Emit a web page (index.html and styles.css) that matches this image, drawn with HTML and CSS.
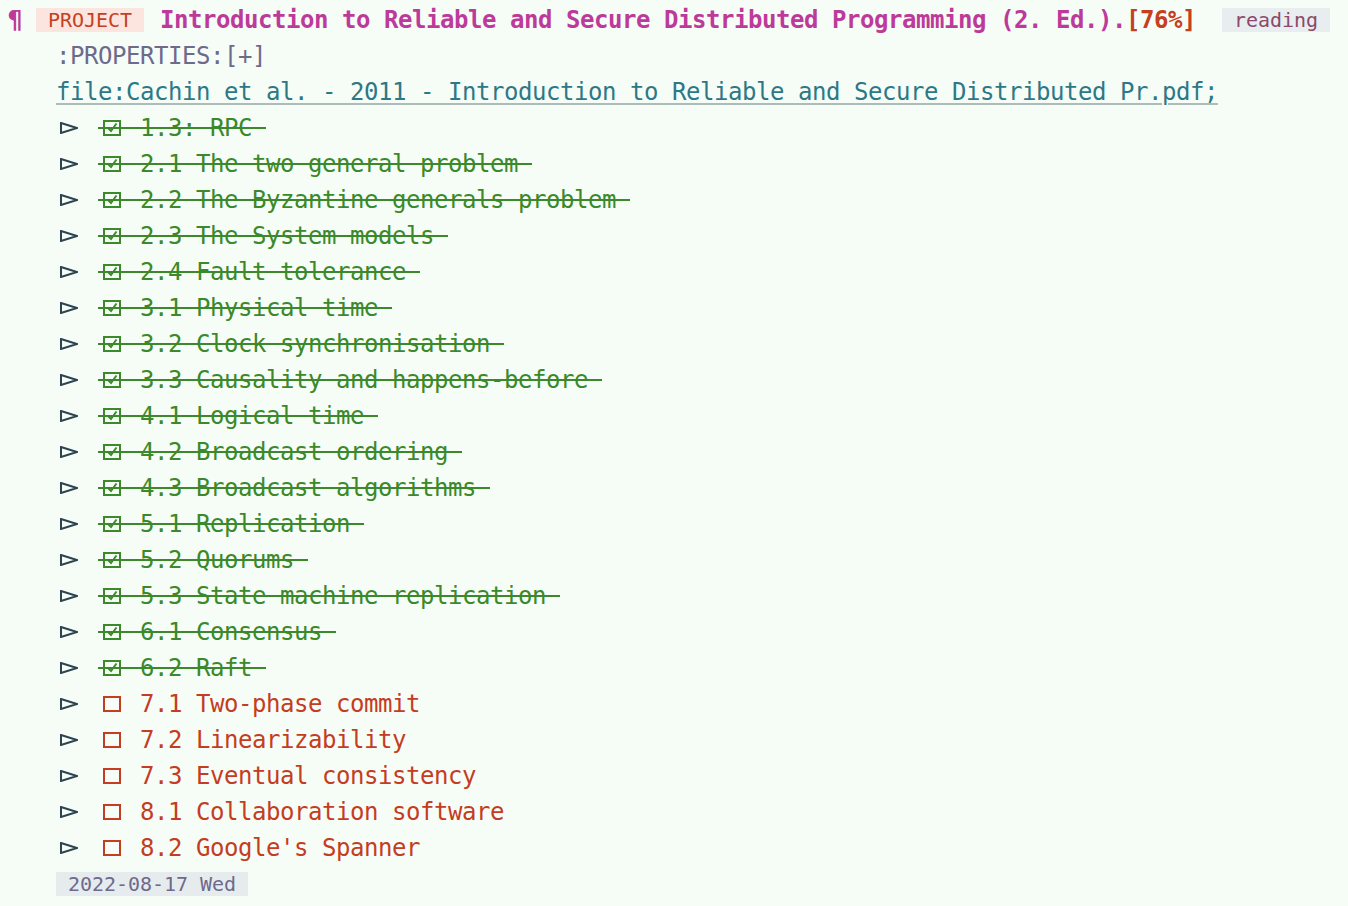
FILE: index.html
```html
<!DOCTYPE html>
<html>
<head>
<meta charset="utf-8">
<link rel="stylesheet" href="styles.css">
</head>
<body>
<div class="doc">
  <div class="row head">
    <span class="pilcrow">¶</span>
    <span class="kw">PROJECT</span>
    <span class="title">Introduction to Reliable and Secure Distributed Programming (2. Ed.).</span><span class="pct">[76%]</span>
    <span class="tag">reading</span>
  </div>
  <div class="row ind"><span class="props">:PROPERTIES:[+]</span></div>
  <div class="row ind"><span class="link">file:Cachin et al. - 2011 - Introduction to Reliable and Secure Distributed Pr.pdf;</span></div>

  <div class="item done"><span class="tri"><svg width="18" height="12" viewBox="0 0 18 12"><polygon points="1,1 17,6 1,11" /></svg></span><span class="task"><span class="cb"><svg width="18" height="16" viewBox="0 0 18 16"><rect x="1" y="1" width="16" height="14"/><polyline points="4.5,7.5 8,11 13.5,3.5"/></svg></span><span class="label"> 1.3: RPC </span></span></div>
  <div class="item done"><span class="tri"><svg width="18" height="12" viewBox="0 0 18 12"><polygon points="1,1 17,6 1,11" /></svg></span><span class="task"><span class="cb"><svg width="18" height="16" viewBox="0 0 18 16"><rect x="1" y="1" width="16" height="14"/><polyline points="4.5,7.5 8,11 13.5,3.5"/></svg></span><span class="label"> 2.1 The two general problem </span></span></div>
  <div class="item done"><span class="tri"><svg width="18" height="12" viewBox="0 0 18 12"><polygon points="1,1 17,6 1,11" /></svg></span><span class="task"><span class="cb"><svg width="18" height="16" viewBox="0 0 18 16"><rect x="1" y="1" width="16" height="14"/><polyline points="4.5,7.5 8,11 13.5,3.5"/></svg></span><span class="label"> 2.2 The Byzantine generals problem </span></span></div>
  <div class="item done"><span class="tri"><svg width="18" height="12" viewBox="0 0 18 12"><polygon points="1,1 17,6 1,11" /></svg></span><span class="task"><span class="cb"><svg width="18" height="16" viewBox="0 0 18 16"><rect x="1" y="1" width="16" height="14"/><polyline points="4.5,7.5 8,11 13.5,3.5"/></svg></span><span class="label"> 2.3 The System models </span></span></div>
  <div class="item done"><span class="tri"><svg width="18" height="12" viewBox="0 0 18 12"><polygon points="1,1 17,6 1,11" /></svg></span><span class="task"><span class="cb"><svg width="18" height="16" viewBox="0 0 18 16"><rect x="1" y="1" width="16" height="14"/><polyline points="4.5,7.5 8,11 13.5,3.5"/></svg></span><span class="label"> 2.4 Fault tolerance </span></span></div>
  <div class="item done"><span class="tri"><svg width="18" height="12" viewBox="0 0 18 12"><polygon points="1,1 17,6 1,11" /></svg></span><span class="task"><span class="cb"><svg width="18" height="16" viewBox="0 0 18 16"><rect x="1" y="1" width="16" height="14"/><polyline points="4.5,7.5 8,11 13.5,3.5"/></svg></span><span class="label"> 3.1 Physical time </span></span></div>
  <div class="item done"><span class="tri"><svg width="18" height="12" viewBox="0 0 18 12"><polygon points="1,1 17,6 1,11" /></svg></span><span class="task"><span class="cb"><svg width="18" height="16" viewBox="0 0 18 16"><rect x="1" y="1" width="16" height="14"/><polyline points="4.5,7.5 8,11 13.5,3.5"/></svg></span><span class="label"> 3.2 Clock synchronisation </span></span></div>
  <div class="item done"><span class="tri"><svg width="18" height="12" viewBox="0 0 18 12"><polygon points="1,1 17,6 1,11" /></svg></span><span class="task"><span class="cb"><svg width="18" height="16" viewBox="0 0 18 16"><rect x="1" y="1" width="16" height="14"/><polyline points="4.5,7.5 8,11 13.5,3.5"/></svg></span><span class="label"> 3.3 Causality and happens-before </span></span></div>
  <div class="item done"><span class="tri"><svg width="18" height="12" viewBox="0 0 18 12"><polygon points="1,1 17,6 1,11" /></svg></span><span class="task"><span class="cb"><svg width="18" height="16" viewBox="0 0 18 16"><rect x="1" y="1" width="16" height="14"/><polyline points="4.5,7.5 8,11 13.5,3.5"/></svg></span><span class="label"> 4.1 Logical time </span></span></div>
  <div class="item done"><span class="tri"><svg width="18" height="12" viewBox="0 0 18 12"><polygon points="1,1 17,6 1,11" /></svg></span><span class="task"><span class="cb"><svg width="18" height="16" viewBox="0 0 18 16"><rect x="1" y="1" width="16" height="14"/><polyline points="4.5,7.5 8,11 13.5,3.5"/></svg></span><span class="label"> 4.2 Broadcast ordering </span></span></div>
  <div class="item done"><span class="tri"><svg width="18" height="12" viewBox="0 0 18 12"><polygon points="1,1 17,6 1,11" /></svg></span><span class="task"><span class="cb"><svg width="18" height="16" viewBox="0 0 18 16"><rect x="1" y="1" width="16" height="14"/><polyline points="4.5,7.5 8,11 13.5,3.5"/></svg></span><span class="label"> 4.3 Broadcast algorithms </span></span></div>
  <div class="item done"><span class="tri"><svg width="18" height="12" viewBox="0 0 18 12"><polygon points="1,1 17,6 1,11" /></svg></span><span class="task"><span class="cb"><svg width="18" height="16" viewBox="0 0 18 16"><rect x="1" y="1" width="16" height="14"/><polyline points="4.5,7.5 8,11 13.5,3.5"/></svg></span><span class="label"> 5.1 Replication </span></span></div>
  <div class="item done"><span class="tri"><svg width="18" height="12" viewBox="0 0 18 12"><polygon points="1,1 17,6 1,11" /></svg></span><span class="task"><span class="cb"><svg width="18" height="16" viewBox="0 0 18 16"><rect x="1" y="1" width="16" height="14"/><polyline points="4.5,7.5 8,11 13.5,3.5"/></svg></span><span class="label"> 5.2 Quorums </span></span></div>
  <div class="item done"><span class="tri"><svg width="18" height="12" viewBox="0 0 18 12"><polygon points="1,1 17,6 1,11" /></svg></span><span class="task"><span class="cb"><svg width="18" height="16" viewBox="0 0 18 16"><rect x="1" y="1" width="16" height="14"/><polyline points="4.5,7.5 8,11 13.5,3.5"/></svg></span><span class="label"> 5.3 State machine replication </span></span></div>
  <div class="item done"><span class="tri"><svg width="18" height="12" viewBox="0 0 18 12"><polygon points="1,1 17,6 1,11" /></svg></span><span class="task"><span class="cb"><svg width="18" height="16" viewBox="0 0 18 16"><rect x="1" y="1" width="16" height="14"/><polyline points="4.5,7.5 8,11 13.5,3.5"/></svg></span><span class="label"> 6.1 Consensus </span></span></div>
  <div class="item done"><span class="tri"><svg width="18" height="12" viewBox="0 0 18 12"><polygon points="1,1 17,6 1,11" /></svg></span><span class="task"><span class="cb"><svg width="18" height="16" viewBox="0 0 18 16"><rect x="1" y="1" width="16" height="14"/><polyline points="4.5,7.5 8,11 13.5,3.5"/></svg></span><span class="label"> 6.2 Raft </span></span></div>

  <div class="item todo"><span class="tri"><svg width="18" height="12" viewBox="0 0 18 12"><polygon points="1,1 17,6 1,11" /></svg></span><span class="task"><span class="cb"><svg width="18" height="16" viewBox="0 0 18 16"><rect x="1" y="1" width="16" height="14"/></svg></span><span class="label"> 7.1 Two-phase commit</span></span></div>
  <div class="item todo"><span class="tri"><svg width="18" height="12" viewBox="0 0 18 12"><polygon points="1,1 17,6 1,11" /></svg></span><span class="task"><span class="cb"><svg width="18" height="16" viewBox="0 0 18 16"><rect x="1" y="1" width="16" height="14"/></svg></span><span class="label"> 7.2 Linearizability</span></span></div>
  <div class="item todo"><span class="tri"><svg width="18" height="12" viewBox="0 0 18 12"><polygon points="1,1 17,6 1,11" /></svg></span><span class="task"><span class="cb"><svg width="18" height="16" viewBox="0 0 18 16"><rect x="1" y="1" width="16" height="14"/></svg></span><span class="label"> 7.3 Eventual consistency</span></span></div>
  <div class="item todo"><span class="tri"><svg width="18" height="12" viewBox="0 0 18 12"><polygon points="1,1 17,6 1,11" /></svg></span><span class="task"><span class="cb"><svg width="18" height="16" viewBox="0 0 18 16"><rect x="1" y="1" width="16" height="14"/></svg></span><span class="label"> 8.1 Collaboration software</span></span></div>
  <div class="item todo"><span class="tri"><svg width="18" height="12" viewBox="0 0 18 12"><polygon points="1,1 17,6 1,11" /></svg></span><span class="task"><span class="cb"><svg width="18" height="16" viewBox="0 0 18 16"><rect x="1" y="1" width="16" height="14"/></svg></span><span class="label"> 8.2 Google's Spanner</span></span></div>

  <div class="row ind"><span class="date">2022-08-17 Wed</span></div>
</div>
</body>
</html>
```

FILE: styles.css
```css
html, body {
  margin: 0;
  padding: 0;
  background: #f6fdf6;
}

.doc {
  padding-top: 2px;
  font-family: "DejaVu Sans Mono", "Liberation Mono", monospace;
  font-size: 24px;
  letter-spacing: -0.45px;
}

.row {
  display: flex;
  align-items: center;
  height: 36px;
}

.row span, .label {
  white-space: pre;
}

.ind {
  padding-left: 56px;
}

.pilcrow {
  width: 28px;
  padding-left: 8px;
  color: #bd3a9b;
  font-weight: 700;
}

.kw, .tag, .date {
  font-size: 20px;
  letter-spacing: -0.04px;
  line-height: 24px;
  height: 24px;
  padding: 0 12px;
}

.kw {
  background: #fde5df;
  color: #c4401f;
  margin-right: 16px;
}

.title {
  color: #bd3a9b;
  font-weight: 700;
}

.pct {
  color: #c4401f;
  font-weight: 700;
}

.tag {
  margin-left: 26px;
  background: #e8eeef;
  color: #8e4868;
}

.props {
  color: #6e6a8c;
}

.link {
  color: #2d7886;
  text-decoration: underline;
  text-decoration-color: #aebcb9;
  text-decoration-thickness: 2px;
  text-underline-offset: 3px;
}

.date {
  background: #e6ecee;
  color: #6e6a8c;
}

.item {
  display: flex;
  align-items: center;
  height: 36px;
  padding-left: 56px;
}

.tri {
  width: 28px;
  margin-right: 14px;
  display: flex;
  align-items: center;
  padding-left: 4px;
  box-sizing: border-box;
}

.tri polygon {
  fill: none;
  stroke: #2d4450;
  stroke-width: 2;
  stroke-linejoin: miter;
}

.task {
  display: flex;
  align-items: center;
  height: 36px;
}

.cb {
  width: 28px;
  padding-left: 5px;
  box-sizing: border-box;
  display: flex;
  align-items: center;
}

.cb svg {
  fill: none;
  stroke-width: 2;
}

.done .task {
  color: #3b892b;
  background-image: linear-gradient(#3b892b, #3b892b);
  background-repeat: no-repeat;
  background-size: 100% 2px;
  background-position: 0 17px;
}

.done .cb svg {
  stroke: #3b892b;
}

.todo .task {
  color: #c43c22;
}

.todo .cb svg {
  stroke: #c43c22;
}
```
